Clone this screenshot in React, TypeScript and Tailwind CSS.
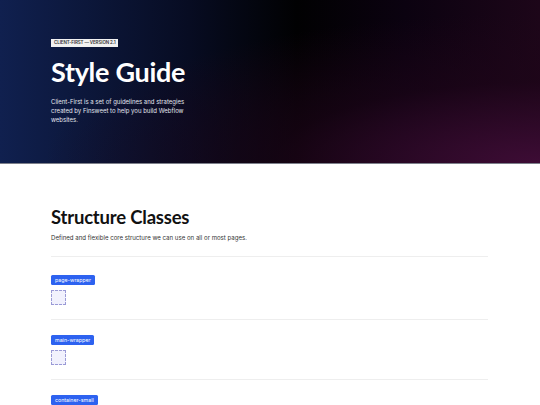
import React from 'react';

const structure = ['page-wrapper', 'main-wrapper', 'container-small'];

function ClassRow({ name }: { name: string }) {
  return (
    <div className="flex flex-col items-start pt-[15px] pb-[14px] border-b border-[#eeeeee]">
      <span className="bg-[#2d62f0] text-white text-[5.3px] leading-[10px] px-[4px] rounded-[1.5px] font-['Inter',sans-serif]">
        {name}
      </span>
      <div className="mt-[5px] w-[15px] h-[15px] border border-dashed border-[#9a9ad6] bg-[#f1f1fd]" />
    </div>
  );
}

export default function App() {
  return (
    <div className="w-[540px] h-[405px] overflow-hidden bg-white font-['Inter',sans-serif]">
      <header className="h-[164px] border-b border-[#7c7f8a] bg-[radial-gradient(ellipse_at_100%_100%,#3d0c35_0%,rgba(30,5,25,0.6)_35%,transparent_65%),linear-gradient(90deg,#10204f_0%,#070c22_35%,#010102_55%,#0b0210_75%,#1d0619_100%)] pl-[51px] pt-[39px] flex flex-col items-start">
        <span className="bg-[#f1f1f1] text-[#333] text-[4.5px] leading-[8px] px-[3px] font-semibold tracking-tight">
          CLIENT-FIRST — VERSION 2.1
        </span>
        <h1 className="mt-[10px] text-white text-[27px] leading-[30px] font-bold font-['Lato',sans-serif] tracking-[-0.3px]">
          Style Guide
        </h1>
        <p className="mt-[10px] w-[145px] text-[#e3e5ee] text-[6px] leading-[9px]">
          Client-First is a set of guidelines and strategies created by Finsweet to help you build Webflow websites.
        </p>
      </header>

      <main className="px-[51px] pt-[41px]">
        <h2 className="text-[#111] text-[18.5px] leading-[24px] font-bold font-['Lato',sans-serif] tracking-[-0.2px]">
          Structure Classes
        </h2>
        <p className="mt-[4px] pb-[14px] w-[437px] border-b border-[#eeeeee] text-[#333] text-[6.1px] leading-[9px]">
          Defined and flexible core structure we can use on all or most pages.
        </p>
        <div className="pt-[3px] w-[437px]">
          {structure.map((s) => (
            <ClassRow key={s} name={s} />
          ))}
        </div>
      </main>
    </div>
  );
}
